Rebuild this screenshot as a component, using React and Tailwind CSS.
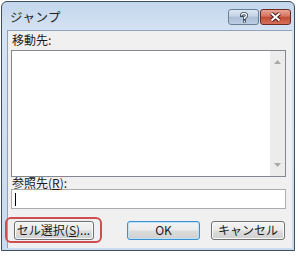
import React from 'react'

const font = { fontFamily: '"Noto Sans CJK JP", "Noto Sans", sans-serif' }

function HelpButton() {
  return (
    <div className="flex h-[16px] w-[31px] items-center justify-center rounded-[3px] border border-[#6d7f97] bg-[linear-gradient(#dbe6f3,#c3d3e6_45%,#a9bdd6_50%,#bccde2)]">
      <svg width="10" height="11" viewBox="0 0 10 11">
        <path d="M2.5 3.5 Q2.5 1.5 5 1.5 Q7.5 1.5 7.5 3.5 Q7.5 5 5.5 5.5 L5.5 7" fill="none" stroke="#3a4a5e" strokeWidth="3" strokeLinecap="square" />
        <rect x="4" y="8" width="3" height="2.5" fill="#3a4a5e" />
        <path d="M2.5 3.5 Q2.5 1.5 5 1.5 Q7.5 1.5 7.5 3.5 Q7.5 5 5.5 5.5 L5.5 7" fill="none" stroke="#fff" strokeWidth="1.3" />
        <rect x="4.8" y="8.6" width="1.4" height="1.3" fill="#fff" />
      </svg>
    </div>
  )
}

function CloseButton() {
  return (
    <div className="flex h-[16px] w-[31px] items-center justify-center rounded-[3px] border border-[#6e2a22] bg-[linear-gradient(#e7a596,#d5725f_45%,#c24a33_50%,#d6705a)]">
      <svg width="13" height="10" viewBox="0 0 13 10">
        <path d="M2.5 1.5 L10.5 8.5 M10.5 1.5 L2.5 8.5" stroke="#4a1810" strokeWidth="4" />
        <path d="M2.5 1.5 L10.5 8.5 M10.5 1.5 L2.5 8.5" stroke="#fff" strokeWidth="2" />
      </svg>
    </div>
  )
}

function Button({ children, width, primary }) {
  return (
    <div
      className={
        'flex h-[19px] items-center justify-center rounded-[3px] border text-[12px] leading-none text-[#1a1a1a] bg-[linear-gradient(#f3f3f3,#ebebeb_48%,#dddddd_52%,#cfcfcf)] ' +
        (primary ? 'border-[#3c8fd0] shadow-[inset_0_0_0_1px_#bde3f8]' : 'border-[#707070] shadow-[inset_0_0_0_1px_#fbfbfb]')
      }
      style={{ width }}
    >
      {children}
    </div>
  )
}

export default function App() {
  return (
    <div className="h-[256px] w-[298px] bg-white pl-[1px] pt-[1px]" style={font}>
      <div className="flex h-[250px] w-[294px] flex-col rounded-t-[6px] border border-[#3f4d5c] bg-[linear-gradient(#c3d6ec,#d5e3f3_12%,#c9dbef)]">
        {/* Title bar */}
        <div className="flex h-[28px] shrink-0 items-start justify-between pl-[8px] pr-[3px]">
          <span className="mt-[7px] text-[12.5px] leading-[16px] tracking-[0.5px] text-[#1e1e1e]">ジャンプ</span>
          <div className="mt-[7px] flex gap-[1px]">
            <HelpButton />
            <CloseButton />
          </div>
        </div>

        {/* Client */}
        <div className="ml-[5px] mr-[2px] mb-[2px] flex-1 border-t border-l border-[#8ea3bb] bg-[#f0f0f0] pl-[3px] text-[12px] text-[#1a1a1a]">
          <div className="mt-[3px] h-[12px] pl-[1px] leading-[12px]">移動先:</div>
          <div className="mt-[4px] flex h-[127px] w-[275px] border border-[#828790] bg-white">
            <div className="flex-1" />
            <div className="flex w-[15px] flex-col items-center justify-between bg-[#ececec] py-[9px]">
              <svg width="7" height="4" viewBox="0 0 7 4"><path d="M0 4 L3.5 0 L7 4 Z" fill="#a9a9a9" /></svg>
              <svg width="7" height="4" viewBox="0 0 7 4"><path d="M0 0 L3.5 4 L7 0 Z" fill="#a9a9a9" /></svg>
            </div>
          </div>
          <div className="h-[12px] pl-[1px] leading-[12px]">
            参照先(<span className="underline">R</span>):
          </div>
          <div className="flex h-[20px] w-[275px] items-center border border-[#abadb3] bg-white pl-[3px]">
            <div className="h-[13px] w-[1px] bg-black" />
          </div>
          <div className="mt-[8px] flex items-center">
            <div className="-ml-[6px] flex h-[26px] w-[97px] items-center justify-center rounded-[6px] border-2 border-[#cf4f4f]">
              <Button width={80}>
                セル選択(<span className="underline">S</span>)...
              </Button>
            </div>
            <div className="ml-[25px]">
              <Button width={73} primary>OK</Button>
            </div>
            <div className="ml-[11px]">
              <Button width={74}>キャンセル</Button>
            </div>
          </div>
        </div>
      </div>
    </div>
  )
}
